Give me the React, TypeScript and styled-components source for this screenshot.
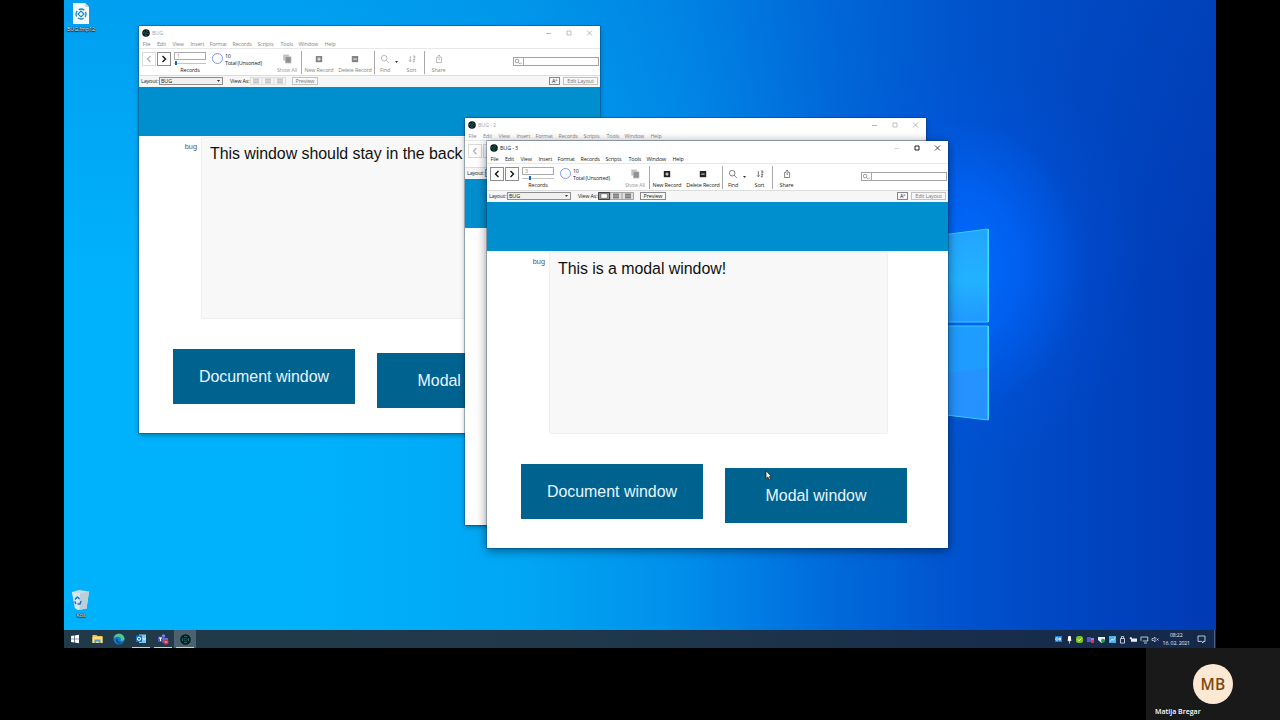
import React from "react";
import styled, { createGlobalStyle, css } from "styled-components";

const GlobalStyle = createGlobalStyle`
  * { box-sizing: border-box; }
  body { margin: 0; background: #000; overflow: hidden; }
`;

const Screen = styled.main`
  display: flex;
  flex-direction: column;
  align-items: center;
  width: 1280px;
  height: 720px;
  background: #000;
  font-family: "Open Sans", "Noto Sans", sans-serif;
`;

const Desktop = styled.section`
  position: relative;
  display: flex;
  flex-direction: column;
  justify-content: space-between;
  width: 1152px;
  height: 630px;
  padding-bottom: 11px;
  overflow: hidden;
  background:
    radial-gradient(ellipse 190px 210px at 890px 265px, rgba(0, 108, 255, 1), rgba(0, 102, 252, 0.75) 35%, rgba(0, 84, 228, 0.25) 70%, rgba(0, 80, 220, 0) 100%),
    linear-gradient(to bottom, rgba(0, 90, 200, 0.22), rgba(0, 100, 200, 0) 45%),
    linear-gradient(to right, #00b2fc 0%, #00b1fb 22%, #00a6f4 40%, #0090ec 53%, #006cdc 66%, #0052ce 78%, #0044c0 89%, #003ab4 100%);
`;

const Wallpaper = styled.svg`
  position: absolute;
  left: 780px;
  top: 180px;
`;

const Shortcut = styled.div`
  position: relative;
  display: flex;
  flex-direction: column;
  align-items: center;
  width: 34px;
  color: #fff;
  font-size: 5.4px;
  line-height: 8px;
  letter-spacing: -0.1px;
  text-shadow: 0 0 1px #000, 0 0 1px #000, 0 1px 1px #000;
  svg { display: block; }
  &:first-of-type { padding-top: 3px; }
`;

const Frame = styled.section<{ $x: number; $y: number; $active?: boolean }>`
  position: absolute;
  left: ${(p) => p.$x}px;
  top: ${(p) => p.$y}px;
  display: flex;
  flex-direction: column;
  width: 461px;
  height: 407px;
  background: #fff;
  box-shadow: 0 0 0 0.5px rgba(0, 50, 90, 0.6), 0 2px ${(p) => (p.$active ? 10 : 5)}px rgba(0, 0, 0, ${(p) => (p.$active ? 0.5 : 0.35)});
  --ink: ${(p) => (p.$active ? "#222" : "#858585")};
  --strong: #222;
  color: var(--ink);
  font-size: 5.4px;
  letter-spacing: -0.14px;
  white-space: nowrap;
`;

const TitleBar = styled.header`
  display: flex;
  align-items: center;
  flex: 0 0 14px;
  padding-left: 3px;
  svg { display: block; }
`;

const Title = styled.span<{ $active?: boolean }>`
  flex: 1;
  margin-left: 2px;
  color: ${(p) => (p.$active ? "#222" : "#a4a4a4")};
`;

const MenuBar = styled.nav`
  display: flex;
  flex: 0 0 8px;
  align-items: center;
  line-height: 8px;
  padding-left: 3.5px;
`;

const MenuItem = styled.span<{ $w: number }>`
  width: ${(p) => p.$w}px;
`;

const Toolbar = styled.div`
  display: flex;
  flex: 0 0 27px;
  border-top: 0.5px solid #e8e8e8;
  padding: 0 1.5px 0 3px;
`;

const NavButton = styled.button<{ $off?: boolean }>`
  display: flex;
  align-items: center;
  justify-content: center;
  width: 14px;
  height: 14px;
  margin: 3px 1px 0 0;
  padding: 0;
  border: 1px solid ${(p) => (p.$off ? "#dadada" : "#8c8c8c")};
  background: #fff;
  color: ${(p) => (p.$off ? "#b5b5b5" : "#111")};
`;

const RecordBox = styled.div`
  display: flex;
  flex-direction: column;
  width: 32px;
  margin: 3px 6px 0 2px;
`;

const RecordInput = styled.div`
  height: 8px;
  padding-left: 2px;
  border: 1px solid #aaa;
  color: #888;
  line-height: 6px;
`;

const Slider = styled.div`
  height: 6px;
  background: linear-gradient(#c4c4c4, #c4c4c4) 0 3px / 100% 1px no-repeat;
`;

const Thumb = styled.div<{ $at: number }>`
  width: 2px;
  height: 4px;
  margin-left: ${(p) => p.$at}px;
  transform: translateY(1px);
  background: #0a6cc4;
`;

const Caption = styled.span<{ $strong?: boolean }>`
  line-height: 8px;
  text-align: center;
  ${(p) => p.$strong && css`color: var(--strong);`}
`;

const Ring = styled.div`
  width: 11px;
  height: 11px;
  margin-top: 4px;
  border: 1.4px solid #8195ee;
  border-radius: 50%;
`;

const Totals = styled.div`
  display: flex;
  flex-direction: column;
  width: 50px;
  padding: 4px 0 0 2px;
  color: var(--strong);
  line-height: 7px;
  letter-spacing: -0.24px;
`;

const Tool = styled.div<{ $w: number; $dim?: boolean }>`
  display: flex;
  flex-direction: column;
  align-items: center;
  width: ${(p) => p.$w}px;
  padding-top: 4px;
  ${(p) => p.$dim && css`color: #999;`}
  svg { display: block; margin-bottom: 1px; }
`;

const Divider = styled.div`
  width: 1px;
  height: 23px;
  margin-top: 2px;
  background: #a9a9a9;
`;

const Caret = styled.div`
  width: 3px;
  height: 2px;
  margin: 12px 1px 0 0;
  background: #333;
  clip-path: polygon(0 0, 100% 0, 50% 100%);
`;

const SearchBox = styled.div`
  display: flex;
  width: 86px;
  height: 9px;
  margin: 8px 0 0 auto;
  border: 1px solid #a3a3a3;
  color: #555;
  svg { display: block; border-right: 1px solid #aaa; }
`;

const LayoutBar = styled.div`
  display: flex;
  align-items: center;
  flex: 0 0 12px;
  padding: 0 2px 1px 2px;
  border-top: 0.5px solid #ddd;
  background: #f6f6f6;
`;

const BarLabel = styled.span<{ $w: number }>`
  width: ${(p) => p.$w}px;
  color: var(--strong);
`;

const Select = styled.div`
  display: flex;
  align-items: center;
  justify-content: space-between;
  width: 64px;
  height: 8px;
  margin-right: 7px;
  padding: 0 2px 0 1px;
  border: 1px solid #8e8e8e;
  background: #f0f0f0;
  color: var(--strong);
  line-height: 6px;
  i { width: 3px; height: 2px; background: #333; clip-path: polygon(0 0, 100% 0, 50% 100%); }
`;

const SmallButton = styled.div<{ $w: number; $dark?: boolean }>`
  width: ${(p) => p.$w}px;
  height: 8px;
  border: 1px solid ${(p) => (p.$dark ? "#888" : "#c2c2c2")};
  background: #f7f7f7;
  color: ${(p) => (p.$dark ? "#222" : "#777")};
  line-height: 6px;
  text-align: center;
`;

const Gap = styled.div<{ $w?: number }>`
  ${(p) => (p.$w ? `width: ${p.$w}px;` : "flex: 1;")}
`;

const Banner = styled.div`
  flex: 0 0 49px;
  background: #008fce;
`;

const Body = styled.div`
  display: flex;
  flex-direction: column;
  flex: 1;
  letter-spacing: 0;
  font-family: "Liberation Sans", sans-serif;
`;

const FieldRow = styled.div`
  display: flex;
  height: 183px;
  overflow: hidden;
`;

const FieldLabel = styled.span`
  width: 62px;
  padding: 6px 4px 0 0;
  color: #555;
  font-size: 7.4px;
  line-height: 9px;
  text-align: right;
`;

const Field = styled.div`
  width: 339px;
  margin-top: 1px;
  padding: 7px 8px;
  border: 1px solid #efefef;
  border-radius: 2px;
  background: #f8f8f8;
  color: #111;
  font-size: 15.95px;
  line-height: 18px;
  letter-spacing: -0.05px;
`;

const Actions = styled.div`
  display: flex;
  gap: 22px;
  padding: 30px 0 0 33.5px;
`;

const Action = styled.button<{ $drop?: number }>`
  width: 182px;
  height: 55px;
  margin-top: ${(p) => p.$drop ?? 0}px;
  padding: 0 0 0 1px;
  border: 0;
  background: #00628e;
  color: #e9f7ff;
  font: 15.95px/55px "Liberation Sans", sans-serif;
`;

const Pointer = styled.svg`
  position: absolute;
  left: 701px;
  top: 470px;
`;

const Taskbar = styled.footer`
  display: flex;
  width: 1152px;
  height: 18px;
  background: linear-gradient(to right, #213a49, #20384a 45%, #182d4b 80%, #14284a);
`;

const TaskItem = styled.div<{ $open?: boolean; $current?: boolean }>`
  display: flex;
  align-items: center;
  justify-content: center;
  width: 22px;
  border: solid transparent;
  border-width: 0 2px;
  background: ${(p) => (p.$current ? "#4b616d" : "none")};
  background-clip: border-box;
  box-shadow: ${(p) => (p.$open ? "inset 0 -1px 0 #b9d6e2" : "none")};
`;

const Tray = styled.div`
  display: flex;
  align-items: center;
  gap: 1.75px;
  margin-left: auto;
  padding-right: 1px;
  svg { display: block; }
`;

const Clock = styled.div`
  width: 34px;
  padding-right: 4px;
  color: #e6ebf2;
  font-size: 5.2px;
  line-height: 8px;
  letter-spacing: -0.15px;
  text-align: center;
  white-space: nowrap;
`;

const TrayEnd = styled.div`
  width: 18px;
  height: 18px;
  border-right: 1px solid #4d6285;
  padding: 5px 0 0 0;
`;

const Participant = styled.aside`
  display: flex;
  flex-direction: column;
  align-self: flex-end;
  width: 134px;
  height: 72px;
  padding: 16px 0 0 9px;
  background: #191919;
  color: #fff;
  font-size: 7px;
  font-weight: 600;
  line-height: 16px;
`;

const Avatar = styled.div`
  width: 40px;
  height: 40px;
  margin-left: 38px;
  border-radius: 50%;
  background: #fde8d3;
  color: #7b4a12;
  font-size: 15.5px;
  line-height: 40px;
  letter-spacing: 0.2px;
  text-align: center;
`;

const AppMark = ({ size = 8 }: { size?: number }) => (
  <svg width={size} height={size} viewBox="0 0 16 16">
    <circle cx="8" cy="8" r="7.6" fill="#071416" />
    <circle cx="8" cy="8" r="4.6" fill="none" stroke="#2f8f92" strokeWidth="1.3" strokeDasharray="5.2 2" strokeDashoffset="2.6" />
    <path d="M8 5.6 10.4 8 8 10.4 5.6 8Z" fill="none" stroke="#2f8f92" />
  </svg>
);

const Controls = ({ active }: { active?: boolean }) => (
  <svg width="62" height="12" viewBox="0 0 62 12" fill="none" stroke={active ? "#222" : "#a8a8a8"} strokeWidth="0.8">
    <path d="M8 6.5h5" stroke={active ? "#ccc" : "#a8a8a8"} />
    <path d="M29 4h4v4h-4z" strokeWidth={active ? 1 : 0.7} />
    <path d="m49 3.500 5 5m0-5-5 5" />
  </svg>
);

const Chevron = ({ flip }: { flip?: boolean }) => (
  <svg width="10" height="10" viewBox="0 0 10 10" fill="none" stroke="currentColor" strokeWidth="1.4">
    <path d={flip ? "M3.5 2 6.5 5l-3 3" : "M6.5 2 3.5 5l3 3"} />
  </svg>
);

const StackIcon = () => (
  <svg width="12" height="12" viewBox="0 0 12 12">
    <path d="M2.3 1.6h5.600v6h-5.600z" fill="#bdbdbd" />
    <path d="M4.200 3.600h6v6.600h-6z" fill="#909090" stroke="#e4e4e4" strokeWidth=".5" />
  </svg>
);

const BoxIcon = ({ plus }: { plus?: boolean }) => (
  <svg width="12" height="12" viewBox="0 0 12 12">
    <path d="M2.800 3h6.400v6.200H2.800z" fill="currentColor" />
    <path d={plus ? "M4.3 6.100h3.4M6 4.400v3.4" : "M4.3 6.100h3.4"} stroke="#fff" strokeWidth=".9" />
  </svg>
);

const Magnifier = () => (
  <svg width="12" height="12" viewBox="0 0 12 12" fill="none" stroke="currentColor" strokeWidth=".55">
    <circle cx="5.2" cy="5.2" r="2.8" />
    <path d="m7.3 7.3 2.6 2.6" />
  </svg>
);

const SortIcon = () => (
  <svg width="12" height="12" viewBox="0 0 12 12" fill="none" stroke="currentColor" strokeWidth=".6">
    <path d="M4.3 3v5.6M3 7.3l1.3 1.4 1.3-1.4M7 3h1.8v2H7.2M7.2 6.5h1.7L7 8.8h2" />
  </svg>
);

const ShareIcon = () => (
  <svg width="12" height="12" viewBox="0 0 12 12" fill="none" stroke="currentColor" strokeWidth=".55">
    <path d="M4.8 4.5H3.6v5h5v-5H7.4M6.1 7V2.2M4.6 3.6l1.5-1.5 1.5 1.5" />
  </svg>
);

const ViewSwitch = ({ active }: { active?: boolean }) => (
  <svg width="36" height="8" viewBox="0 0 36 8">
    <path d="M.5.5h35v7H.5zM12 0v8M24 0v8" fill={active ? "#ddd" : "#f3f3f3"} stroke={active ? "#888" : "#d6d6d6"} strokeWidth=".7" />
    {active && <path d="M.5.5h11v7H.5z" fill="#999" stroke="#444" />}
    {active ? <path d="M3 1.800h6.400v4.400H3z" fill="#fff" stroke="#333" strokeWidth=".4" /> : <path d="M3 2.2h6M3 4h6M3 5.8h6" stroke="#b0b0b0" />}
    <path d="M15 2.2h6M15 4h6M15 5.8h6M27 2.2h6M27 4h6M27 5.8h6" stroke={active ? "#555" : "#b0b0b0"} />
  </svg>
);

const MENU: [string, number][] = [
  ["File", 14.5], ["Edit", 15.500], ["View", 18], ["Insert", 19], ["Format", 23],
  ["Records", 25], ["Scripts", 23], ["Tools", 18], ["Window", 26], ["Help", 12],
];

type WindowProps = {
  x: number;
  y: number;
  title: string;
  record?: string;
  slider?: number;
  text?: string;
  active?: boolean;
  covered?: boolean;
};

const RecordTools = ({ record, slider = 0 }: { record?: string; slider?: number }) => (
  <>
    <RecordBox>
      <RecordInput>{record}</RecordInput>
      <Slider><Thumb $at={slider} /></Slider>
      <Caption $strong>Records</Caption>
    </RecordBox>
    <Ring />
    <Totals><span>10</span><span>Total (Unsorted)</span></Totals>
    <Tool $w={28} $dim><StackIcon /><Caption>Show All</Caption></Tool>
    <Divider />
    <Tool $w={34}><BoxIcon plus /><Caption>New Record</Caption></Tool>
    <Tool $w={38}><BoxIcon /><Caption>Delete Record</Caption></Tool>
    <Divider />
    <Tool $w={20}><Magnifier /><Caption>Find</Caption></Tool>
    <Caret />
    <Tool $w={25}><SortIcon /><Caption>Sort</Caption></Tool>
    <Divider />
    <Tool $w={27}><ShareIcon /><Caption>Share</Caption></Tool>
    <SearchBox>
      <svg width="10" height="7" viewBox="0 0 10 7" fill="none" stroke="currentColor" strokeWidth=".6">
        <circle cx="3.4" cy="3" r="2" /><path d="m4.9 4.5 1.8 1.8M7 5.4h1.6" />
      </svg>
    </SearchBox>
  </>
);

const LayoutTools = ({ active }: { active?: boolean }) => (
  <>
    <Select>BUG<i /></Select>
    <BarLabel $w={20}>View As:</BarLabel>
    <ViewSwitch active={active} />
    <Gap $w={6} />
    <SmallButton $w={26} $dark={active}>Preview</SmallButton>
    <Gap />
    <SmallButton $w={11} $dark>Aª</SmallButton>
    <Gap $w={3} />
    <SmallButton $w={35}>Edit Layout</SmallButton>
  </>
);

/* A covered window keeps only the parts that stay in sight beside the one in front. */
const DocWindow = ({ x, y, title, record, slider, text, active, covered }: WindowProps) => (
  <Frame $x={x} $y={y} $active={active}>
    <TitleBar>
      <AppMark />
      <Title $active={active}>{title}</Title>
      <Controls active={active} />
    </TitleBar>
    <MenuBar>
      {MENU.map(([name, w]) => <MenuItem key={name} $w={w}>{name}</MenuItem>)}
    </MenuBar>
    <Toolbar>
      <NavButton $off={!active}><Chevron /></NavButton>
      <NavButton $off={covered}><Chevron flip /></NavButton>
      {!covered && <RecordTools record={record} slider={slider} />}
    </Toolbar>
    <LayoutBar>
      <BarLabel $w={18}>Layout:</BarLabel>
      {covered ? <Select /> : <LayoutTools active={active} />}
    </LayoutBar>
    <Banner />
    {!covered && (
      <Body>
        <FieldRow>
          <FieldLabel>bug</FieldLabel>
          <Field>{text}</Field>
        </FieldRow>
        <Actions>
          <Action>Document window</Action>
          <Action $drop={4}>Modal window</Action>
        </Actions>
      </Body>
    )}
  </Frame>
);

const TrayIcons = () => (
  <>
    <svg width="9" height="8" viewBox="0 0 9 8"><path d="M1 1h7v6H1z" fill="#1683d8" /><circle cx="3" cy="4" r="1.3" fill="none" stroke="#fff" strokeWidth=".8" /><path d="M5 2.5h2v3H5z" fill="#bfe3ff" /></svg>
    <svg width="9" height="9" viewBox="0 0 9 9"><rect x="3" y="1" width="3" height="5" rx="1" fill="#fff" /><path d="M2.4 5q2 2.6 4.2 0M4.5 6.5v2" stroke="#fff" strokeWidth=".7" fill="none" /></svg>
    <svg width="9" height="9" viewBox="0 0 9 9"><rect x="1" y="1" width="7" height="7" rx="2.5" fill="#7cc11c" /><path d="m2.8 4.4 1.4 1.4 2.2-2.4" stroke="#fff" fill="none" /></svg>
    <svg width="9" height="9" viewBox="0 0 9 9"><path d="M1 2h4v5H1z" fill="#5559b8" /><path d="M5 3h3v4H5z" fill="#8087e4" /><circle cx="6.5" cy="6.5" r="1.8" fill="#d13a5c" /></svg>
    <svg width="9" height="9" viewBox="0 0 9 9"><path d="M1 2h7v3L4.5 8 1 5z" fill="#e8ecee" /><circle cx="6" cy="5.7" r="2" fill="#16a34a" /></svg>
    <svg width="9" height="9" viewBox="0 0 9 9"><path d="M1 1h7v7H1z" fill="#4ab4ea" /><path d="M2 6.5 4 4l1.3 1.4L7 2.5" stroke="#d8f2ff" fill="none" strokeWidth=".8" /></svg>
    <svg width="9" height="9" viewBox="0 0 9 9" fill="none" stroke="#e8ecf3" strokeWidth=".8"><path d="M2.5 3.5h4v4.6h-4zM3.4 3.5v-2h2.2v2" /></svg>
    <svg width="9" height="9" viewBox="0 0 9 9"><path d="M2 3.4h6v3.4H2zM.8 2.2h2v2h-2z" fill="#e8ecf3" /></svg>
    <svg width="9" height="9" viewBox="0 0 9 9" fill="none" stroke="#e8ecf3" strokeWidth=".8"><path d="M1.5 2h6.3v4H2.8M4 8h3M1 1.6v4.2" /></svg>
    <svg width="9" height="9" viewBox="0 0 9 9" fill="none" stroke="#e8ecf3" strokeWidth=".7"><path d="M1 3.5h1.4L4 2v5L2.4 5.5H1zM5.5 3.5l2 2m0-2-2 2" /></svg>
  </>
);

export default function App() {
  return (
    <Screen>
      <GlobalStyle />
      <Desktop>
        <Wallpaper width="170" height="280" viewBox="0 0 170 280">
          <defs>
            <linearGradient id="pane" x1="0" y1="0" x2="0" y2="1">
              <stop offset="0" stopColor="#23a4ff" /><stop offset=".55" stopColor="#22b2ff" /><stop offset="1" stopColor="#2198ff" />
            </linearGradient>
          </defs>
          <path d="M60 60 144 49v93H60z" fill="url(#pane)" stroke="#35cfff" />
          <path d="M60 146h84v94L60 230z" fill="#1f9cff" stroke="#35cfff" />
          <path d="m60 200 83.500-12v51L60 229z" fill="#2a8fff" opacity=".7" />
          <path d="M144.300 49v93M144.300 146v94" stroke="#3ee0ff" strokeWidth="1.300" />
        </Wallpaper>
        <Shortcut>
          <svg width="18" height="22" viewBox="0 0 18 22">
            <path d="M1 0h12l4 4v17H1z" fill="#f4f9fc" /><path d="M13 0v4h4z" fill="#bcd6e4" />
            <circle cx="9" cy="11" r="5" fill="none" stroke="#1f8ab2" strokeWidth="1.300" strokeDasharray="6 1.850" strokeDashoffset="3" />
            <path d="m9 8 3 3-3 3-3-3z" fill="none" stroke="#1f8ab2" strokeWidth="1.200" />
          </svg>
          BUG.fmp12
        </Shortcut>
        <Shortcut>
          <svg width="20" height="22" viewBox="0 0 20 22">
            <path d="M1 3 8 1l10 1.500-2.500 17L7 21l-3-2z" fill="#c9dbe6" />
            <path d="m1 3 8 1.500 9-2-2.500 17L7 21l-3-2z" fill="#dfe9ef" opacity=".8" />
            <path d="M9 4.500 18 2.500l-2.500 17L8.500 21z" fill="#a9bfcc" opacity=".6" />
            <path d="M4 10.500 6.300 8l2.400 2M10 12l-1 3H6.500M5 15l-1.300-2.600" fill="none" stroke="#1478ca" strokeWidth="1.500" />
          </svg>
          Koš
        </Shortcut>
        <DocWindow x={75} y={26} title="BUG" record="1" slider={1} text="This window should stay in the back" />
        <DocWindow x={401} y={118} title="BUG - 2" covered />
        <DocWindow x={423} y={141} title="BUG - 3" record="3" slider={7} text="This is a modal window!" active />
        <Pointer width="8" height="11" viewBox="0 0 8 11">
          <path d="M1 .8v7.700l1.900-1.600 1.300 2.900 1.300-.6-1.200-2.800h2.200z" fill="#fff" stroke="#111" strokeWidth=".7" />
        </Pointer>
      </Desktop>
      <Taskbar>
        <TaskItem><svg width="10" height="10" viewBox="0 0 10 10"><path d="M1 2l3.200-.5v3.200H1zM4.800 1.400 9 .8v3.900H4.800zM1 5.300h3.200v3.200L1 8zM4.800 5.300H9v3.900l-4.200-.6z" fill="#fff" /></svg></TaskItem>
        <TaskItem><svg width="11" height="10" viewBox="0 0 11 10"><path d="M.5 1h4l1 1h5v7H.5z" fill="#f2c14e" /><path d="M.5 3h10v6H.5z" fill="#ffdc7c" /><path d="M2.500 5.500h6V9h-1.700V7.500H4.200V9H2.500z" fill="#469fd6" /></svg></TaskItem>
        <TaskItem><svg width="12" height="12" viewBox="0 0 12 12"><circle cx="6" cy="6" r="5.600" fill="#1479cc" /><path d="M.8 4.500C2-.5 10.500-1 11.500 5.500c0 2-2 2.500-4 2 1-1.500.5-3.500-2-3.500C3 3.500 1.500 4.500.8 5.500z" fill="#4fc98a" /><path d="M5 6c-.5 3 2.500 4 5 3-2 2.500-6 2.500-7-1C2.700 6.500 3.600 5.500 5 6z" fill="#0d4f94" /></svg></TaskItem>
        <TaskItem $open><svg width="12" height="10" viewBox="0 0 12 10"><path d="M4 .5h7v8.500H4z" fill="#7cc7f5" /><path d="M1 1.500h6v6.500H1z" fill="#1173c7" /><circle cx="4" cy="4.800" r="1.600" fill="none" stroke="#fff" strokeWidth="1" /><path d="m7.500 4 1.700 1.500L11 4" stroke="#fff" fill="none" /></svg></TaskItem>
        <TaskItem $open><svg width="12" height="11" viewBox="0 0 12 11"><circle cx="6.500" cy="2" r="1.700" fill="#7b83eb" /><path d="M5 4h6v4.500H5z" fill="#6970d4" /><path d="M1 2.500h5v5.500H1z" fill="#4b53bc" /><path d="M2 4h3M3.500 4v3" stroke="#fff" /><circle cx="9" cy="8" r="2.600" fill="#c4314b" /><path d="M7.600 8h2.800" stroke="#fff" strokeWidth=".8" /></svg></TaskItem>
        <TaskItem $open $current><AppMark size={11} /></TaskItem>
        <Tray>
          <TrayIcons />
          <Clock>08:22<br />16. 02. 2021</Clock>
          <TrayEnd><svg width="9" height="9" viewBox="0 0 9 9" fill="none" stroke="#e8ecf3" strokeWidth=".8"><path d="M1 1h7v5.400H6V8L4.400 6.400H1z" /></svg></TrayEnd>
        </Tray>
      </Taskbar>
      <Participant>
        <Avatar>MB</Avatar>
        Matija Bregar
      </Participant>
    </Screen>
  );
}
